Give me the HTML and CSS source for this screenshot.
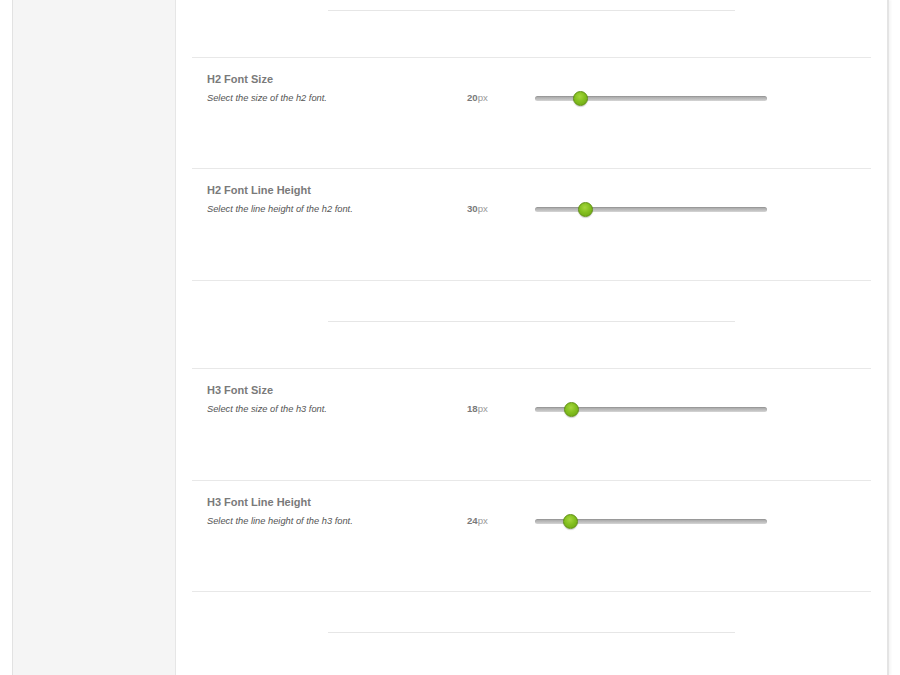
FILE: index.html
```html
<!DOCTYPE html>
<html>
<head>
<meta charset="utf-8">
<link rel="stylesheet" href="styles.css">
</head>
<body>
<div class="frame">
  <aside class="sidebar"></aside>
  <main class="main">
    <div class="divider divider-top"><span class="short-line"></span></div>
    <section class="group">
      <div class="row row-short">
        <div class="label">
          <div class="title">H2 Font Size</div>
          <div class="desc">Select the size of the h2 font.</div>
        </div>
        <div class="value"><b>20</b>px</div>
        <div class="slider"><span class="track"></span><span class="handle" style="left: 38px"></span></div>
      </div>
      <div class="row row-tall">
        <div class="label">
          <div class="title">H2 Font Line Height</div>
          <div class="desc">Select the line height of the h2 font.</div>
        </div>
        <div class="value"><b>30</b>px</div>
        <div class="slider"><span class="track"></span><span class="handle" style="left: 43px"></span></div>
      </div>
    </section>
    <div class="divider"><span class="short-line"></span></div>
    <section class="group">
      <div class="row row-tall">
        <div class="label">
          <div class="title">H3 Font Size</div>
          <div class="desc">Select the size of the h3 font.</div>
        </div>
        <div class="value"><b>18</b>px</div>
        <div class="slider"><span class="track"></span><span class="handle" style="left: 29px"></span></div>
      </div>
      <div class="row row-short">
        <div class="label">
          <div class="title">H3 Font Line Height</div>
          <div class="desc">Select the line height of the h3 font.</div>
        </div>
        <div class="value"><b>24</b>px</div>
        <div class="slider"><span class="track"></span><span class="handle" style="left: 28px"></span></div>
      </div>
    </section>
    <div class="divider"><span class="short-line"></span></div>
  </main>
</div>
</body>
</html>
```

FILE: styles.css
```css
html, body {
  margin: 0;
  padding: 0;
  background: #ffffff;
  font-family: "Liberation Sans", Arial, Helvetica, sans-serif;
}

.frame {
  margin-left: 12px;
  width: 874px;
  height: 675px;
  overflow: hidden;
  display: flex;
  border-left: 1px solid #e2e2e2;
  border-right: 2px solid #e4e4e4;
  box-shadow: 2px 0 2px rgba(0, 0, 0, 0.04);
}

.sidebar {
  width: 162px;
  flex: none;
  background: #f5f5f5;
  border-right: 1px solid #e6e6e6;
}

.main {
  flex: 1;
  padding: 10px 16px 0 16px;
  display: flex;
  flex-direction: column;
}

.divider {
  display: flex;
  justify-content: center;
  padding: 40px 0 46px 0;
}

.divider-top {
  padding-top: 0;
}

.short-line {
  display: block;
  width: 407px;
  height: 1px;
  background: #e6e6e6;
}

.group {
  border-bottom: 1px solid #e8e8e8;
}

.row {
  border-top: 1px solid #e8e8e8;
  display: grid;
  grid-template-columns: 260px 68px 232px;
  align-items: start;
  padding: 14px 0 0 15px;
  box-sizing: border-box;
}

.row-short { height: 111px; }
.row-tall { height: 112px; }

.title {
  font-size: 11px;
  line-height: 14px;
  font-weight: bold;
  color: #7a7a7a;
}

.desc {
  margin-top: 6px;
  font-size: 9.3px;
  line-height: 12px;
  font-style: italic;
  color: #555555;
}

.value {
  margin-top: 20px;
  font-size: 9.6px;
  line-height: 12px;
  color: #999999;
}

.value b {
  color: #7a7a7a;
}

.slider {
  position: relative;
  margin-top: 19px;
  height: 15px;
  display: flex;
  align-items: center;
}

.track {
  display: block;
  width: 100%;
  height: 5px;
  border-radius: 3px;
  background: linear-gradient(#a9a9a9, #bdbdbd 60%, #d6d6d6);
  box-shadow: inset 0 1px 1px rgba(0, 0, 0, 0.12);
}

.handle {
  position: absolute;
  top: 0;
  width: 13px;
  height: 13px;
  border-radius: 50%;
  border: 1px solid #5f8f12;
  background: radial-gradient(circle at 45% 35%, #a6d63e 0%, #84c020 45%, #6aa212 100%);
  box-shadow: 0 1px 1px rgba(0, 0, 0, 0.2);
}
```
